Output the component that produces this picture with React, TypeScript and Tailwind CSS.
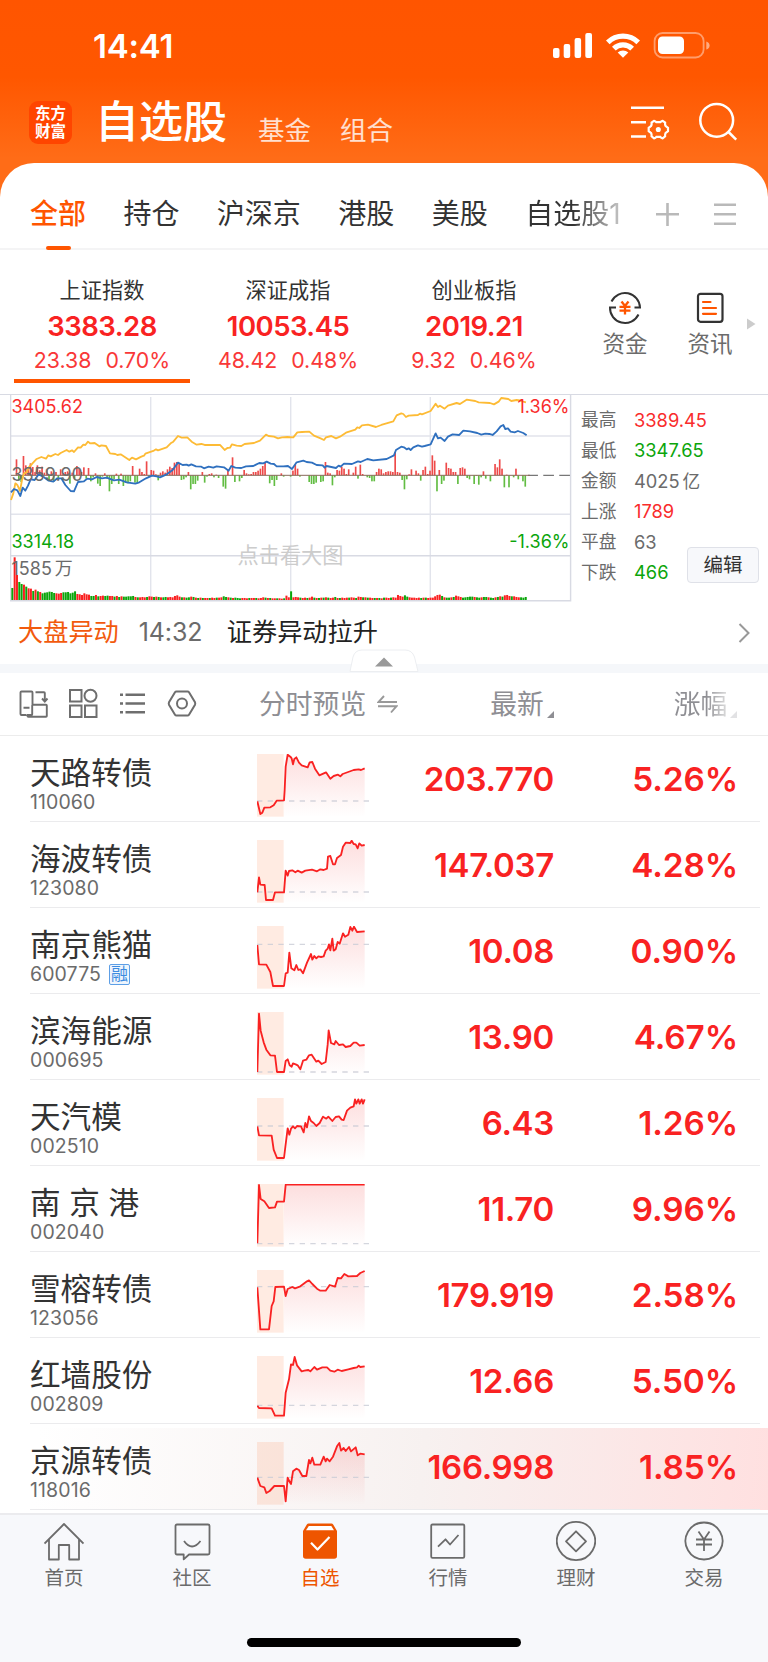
import type { ReactNode } from "react";

type IndexQuote = { name: string; value: string; change: string; percent: string; active?: boolean };

type Stock = {
  name: string;
  code: string;
  price: string;
  percent: string;
  base: number;
  points: string;
  margin?: boolean;
  highlight?: boolean;
};

const GROUPS = ["持仓", "沪深京", "港股", "美股"];

const INDEXES: IndexQuote[] = [
  { name: "上证指数", value: "3383.28", change: "23.38", percent: "0.70%", active: true },
  { name: "深证成指", value: "10053.45", change: "48.42", percent: "0.48%" },
  { name: "创业板指", value: "2019.21", change: "9.32", percent: "0.46%" },
];

const STATS = [
  { label: "最高", value: "3389.45", color: "text-[#f92c2c]" },
  { label: "最低", value: "3347.65", color: "text-[#0ba50b]" },
  { label: "金额", value: "4025", unit: "亿", color: "text-[#6b6b6b]" },
  { label: "上涨", value: "1789", color: "text-[#f92c2c]" },
  { label: "平盘", value: "63", color: "text-[#6b6b6b]" },
  { label: "下跌", value: "466", color: "text-[#0ba50b]" },
];

const STOCKS: Stock[] = [
  {
    name: "天路转债", code: "110060", price: "203.770", percent: "5.26%", base: 141,
    points: "1,142 10,180 16,176 22,161 40,160 50,154 59,140 81,139 83,108 86,38 92,2 100,8 104,13 108,31 112,15 118,10 126,26 134,34 152,40 158,25 166,24 174,44 187,64 207,55 220,74 230,66 243,62 250,67 257,60 290,48 305,46 312,48 323,43",
  },
  {
    name: "海波转债", code: "123080", price: "147.037", percent: "4.28%", base: 156,
    points: "1,157 6,112 10,134 23,135 27,180 48,180 54,157 81,157 86,92 92,107 96,93 106,91 115,97 122,92 134,98 145,92 165,89 180,94 190,88 200,90 210,86 213,50 220,48 228,73 234,73 240,54 252,45 258,20 266,8 280,9 284,2 290,12 296,13 302,25 307,10 314,17 323,15",
  },
  {
    name: "南京熊猫", code: "600775", price: "10.08", percent: "0.90%", base: 55, margin: true,
    points: "1,57 6,115 28,116 40,138 48,180 81,180 86,142 92,140 97,80 103,127 112,133 118,117 124,132 130,130 138,142 150,110 162,84 166,101 172,90 178,97 184,91 192,93 200,91 206,74 212,68 216,55 220,73 226,38 230,74 236,70 242,48 248,53 258,22 264,32 274,26 280,3 286,14 291,2 300,18 323,16",
  },
  {
    name: "滨海能源", code: "000695", price: "13.90", percent: "4.67%", base: 180,
    points: "1,180 6,5 11,56 20,91 28,113 40,130 54,131 60,180 81,180 86,147 92,142 98,160 104,164 108,154 116,157 122,160 130,172 138,146 148,143 156,130 164,128 178,149 184,146 194,156 206,150 212,98 215,55 222,93 232,97 236,87 246,99 258,97 266,105 280,102 290,92 298,92 308,101 323,99",
  },
  {
    name: "天汽模", code: "002510", price: "6.43", percent: "1.26%", base: 84,
    points: "1,85 6,112 44,113 50,155 60,180 81,180 85,147 92,91 97,110 102,92 108,85 114,91 120,84 132,85 140,103 145,75 150,88 156,55 162,69 170,75 178,84 188,75 198,56 208,62 214,56 226,69 236,57 246,55 254,65 260,66 270,38 280,29 290,25 294,4 298,17 304,4 308,17 314,4 318,17 323,4",
  },
  {
    name: "南 京 港", code: "002040", price: "11.70", percent: "9.96%", base: 179,
    points: "1,178 6,3 11,45 22,52 36,72 54,70 60,53 81,53 86,2 323,2",
  },
  {
    name: "雪榕转债", code: "123056", price: "179.919", percent: "2.58%", base: 50,
    points: "1,52 10,178 36,178 44,108 50,94 55,51 81,50 86,78 92,57 106,51 114,55 130,49 150,34 156,31 166,42 180,56 190,62 206,62 218,45 234,50 242,24 252,25 262,12 274,19 300,18 310,9 323,3",
  },
  {
    name: "红墙股份", code: "002809", price: "12.66", percent: "5.50%", base: 148,
    points: "1,149 6,156 44,157 54,179 81,179 86,110 96,70 102,25 108,27 113,3 120,28 134,46 142,44 154,42 160,46 172,33 180,41 196,34 210,34 220,44 232,47 242,41 254,45 274,40 290,36 300,34 305,29 310,33 323,31",
  },
  {
    name: "京源转债", code: "118016", price: "166.998", percent: "1.85%", base: 106, highlight: true,
    points: "1,107 10,132 22,136 28,153 38,147 52,132 81,132 86,178 92,107 97,118 102,126 108,88 118,80 126,84 136,102 148,102 156,54 160,64 166,47 172,68 190,68 200,44 206,58 210,50 218,58 228,44 240,13 247,3 252,26 260,18 266,27 276,15 282,28 296,16 302,40 310,35 323,37",
  },
];

const LEAD_LINE =
  "33,345 40,325 46,295 52,300 60,318 66,285 72,265 80,262 88,245 96,237 110,222 124,216 138,221 145,211 152,214 166,207 174,210 182,204 200,195 208,200 216,196 222,201 234,187 242,188 250,179 256,180 264,170 270,175 284,174 298,184 304,181 318,183 330,205 346,207 352,210 362,208 388,225 396,218 408,223 424,215 432,212 436,206 460,198 468,193 474,196 500,187 512,175 520,170 534,153 545,158 562,157 575,170 590,179 604,177 614,180 660,180 674,195 682,189 690,188 696,178 710,182 724,183 734,177 762,174 780,167 798,149 806,153 822,155 834,160 846,157 862,156 880,157 892,142 906,141 928,140 942,152 962,160 972,165 978,157 994,153 1008,160 1020,155 1038,143 1066,134 1072,127 1078,129 1086,121 1104,119 1128,126 1144,120 1180,109 1190,91 1204,85 1210,87 1218,96 1226,92 1254,90 1260,86 1266,88 1292,78 1307,56 1314,66 1320,62 1334,71 1344,62 1370,54 1380,57 1400,44 1426,48 1436,52 1470,54 1482,58 1496,50 1504,39 1525,42 1534,48 1550,45 1560,46 1570,50 1578,52";

const PRICE_LINE =
  "33,322 42,312 52,316 61,333 68,308 76,317 84,302 92,283 104,285 116,268 130,275 146,287 160,290 172,280 184,280 196,300 212,318 222,319 234,291 252,289 262,281 276,283 290,276 306,280 320,278 342,286 358,284 380,292 406,296 418,292 438,280 456,272 470,274 480,277 500,268 518,255 534,233 548,240 560,239 566,242 574,238 588,244 604,245 612,250 626,245 640,248 650,244 672,247 686,257 694,243 706,248 724,249 738,244 760,243 778,234 790,235 800,230 812,236 822,237 830,244 850,244 864,243 876,252 890,232 910,227 920,231 936,233 950,240 968,241 974,248 980,243 1008,249 1016,242 1022,245 1032,236 1056,237 1074,229 1082,231 1102,222 1120,226 1160,222 1182,211 1188,195 1204,185 1212,187 1220,193 1226,190 1232,195 1240,187 1254,181 1266,185 1274,183 1292,178 1307,145 1314,160 1322,158 1334,168 1344,155 1358,148 1378,150 1390,137 1410,139 1432,144 1444,149 1456,146 1468,147 1478,150 1490,139 1502,124 1510,120 1516,132 1524,130 1532,140 1544,142 1554,138 1570,144 1580,151";

// one value per sample, positive is drawn upwards in red
const MOMENTUM = [
  48, -16, -20, 58, 30, 18, 36, 25, 10, 30, 15, 26, 8, 18, -15, 12, -20, 10, -10, 18, 6, 10, 12, -25, 8, -10, 28, 20,
  10, 24, -10, 22, -18, -6, 6, -25, -32, -4, 6, -10, -48, -26, -12, 5, -26, 5, -32, -22, -24, -18, 28, -22, -24, 20,
  10, 4, 42, -4, 16, 14, 3, -15, 8, 12, 8, 18, 26, 22, 38, 40, 35, -14, -12, -6, 10, -42, -26, -26, -16, 0, 10, -22,
  -4, 4, 6, -6, 2, -8, 0, -34, -40, 18, 0, 54, -20, 0, -18, -8, 16, 6, 3, 4, 10, 10, 14, 20, 28, 38, 0, -24, -14,
  -32, -14, 0, 6, -4, 0, 0, -4, 14, 32, 20, -4, 0, 0, 0, -20, -26, -26, -22, 0, -20, -18, 40, 8, 6, -30, -6, 16, 14,
  26, 20, 4, 18, 0, 8, 26, -10, 32, 4, 0, -6, -8, -18, -18, 10, 20, 18, 6, 10, 12, 12, 10, 70, 10, 8, -14, -42, -12,
  3, 18, 0, 14, 6, -16, 16, 26, 4, 14, 60, 44, -48, 16, -26, -16, 38, 22, 20, 10, 10, -26, 22, 24, 20, -8, -12, 0,
  -26, -2, -28, -6, 12, -10, 0, -18, 0, 34, 24, 48, 20, -36, 2, -36, 0, -6, 20, -12, 0, -18, -34,
];

const VOLUME = [
  -36, 128, 75, -54, -48, 46, -40, 35, 34, -27, 31, -26, 24, -20, -22, -23, -25, -24, -21, 20, 19, 21, -23, -23, -24,
  -20, -22, -26, 18, 17, 15, 20, 17, 16, -12, -12, 15, -11, 12, 13, -12, -13, 12, 12, -10, 12, -9, 11, -10, -10, -11,
  -11, -12, 9, -8, 8, 9, 8, -9, 11, 10, -9, 10, -9, 8, -8, -9, 8, 9, 8, 12, 14, 10, -8, 8, -7, -8, 10, -9, 7, -6, 7,
  -6, 6, 6, -6, 7, 6, -7, 7, 8, -11, -9, 8, -7, 6, -7, -6, -5, 6, 6, 5, -6, 6, 6, -6, 5, 6, 8, -7, 6, -6, 5, 5, -5, 5,
  4, -5, 13, 8, -26, 8, 9, 8, -7, 6, 7, -6, 7, 10, -7, 6, -6, 7, -7, 8, -7, 6, 7, -9, 6, -6, 7, 6, 7, -7, 8, 7, -6, 10,
  9, -8, 8, -7, 7, 6, -6, 6, -6, 5, -7, 7, 6, -7, 8, 7, 15, 12, 10, -14, -10, 8, 7, 7, 6, 7, -6, 7, -7, 6, 7, 7, 11,
  15, 16, -12, 8, -7, -7, 8, -9, 13, 11, 9, -7, -8, -9, -10, -10, 9, -8, -7, 8, -9, -9, 8, -7, -6, 8, -9, 11, -10, 14,
  15, 12, -11, 11, 9, 8, -8, -7, -9,
];

function StatusBar() {
  return (
    <div className="flex h-[90px] items-start justify-between pt-[26px] pl-[93px] pr-[58px]">
      <span className="text-[33px] font-semibold leading-[40px] tracking-[-0.2px]">14:41</span>
      <svg className="mt-[6px]" width="158" height="27" viewBox="552 32 158 27" fill="white">
        <rect x="553" y="48" width="6.5" height="10" rx="2" />
        <rect x="563.7" y="44" width="6.5" height="14" rx="2" />
        <rect x="574.6" y="38" width="6.5" height="20" rx="2" />
        <rect x="585.3" y="33" width="6.7" height="25" rx="2" />
        <path d="M606 40.5a24 24 0 0 1 34 0l-3.6 3.7a19 19 0 0 0-26.8 0z" />
        <path d="M612 46.7a15.7 15.7 0 0 1 22 0l-3.7 3.7a10.5 10.5 0 0 0-14.6 0z" />
        <path d="M617.7 52.5a7.7 7.7 0 0 1 10.6 0l-5.3 5.2z" />
        <rect x="654.6" y="33" width="49" height="24.5" rx="8" fill="none" stroke="white" strokeOpacity=".42" strokeWidth="1.8" />
        <rect x="658" y="36.5" width="26" height="17.5" rx="4.5" />
        <path d="M706.3 41.500v8q3.300-1 3.300-4t-3.300-4z" fillOpacity=".5" />
      </svg>
    </div>
  );
}

function TitleBar() {
  return (
    <div className="flex h-[73px] items-start">
      <div className="ml-[29px] mt-[11px] flex h-[43px] w-[43px] flex-col items-center justify-center rounded-[9px] bg-[#ff4500] text-[15.5px] font-bold leading-[18px]">
        <span>东方</span>
        <span>财富</span>
      </div>
      <h1 className="ml-[23px] mt-[4px] text-[44px] font-medium leading-[56px]">自选股</h1>
      <span className="ml-[31px] mt-[22px] text-[26.5px] leading-[36px] text-white/80">基金</span>
      <span className="ml-[29px] mt-[22px] text-[26.5px] leading-[36px] text-white/80">组合</span>
      <svg className="ml-auto mt-[12px] mr-[30px]" width="108" height="42" viewBox="630 102 108 42" fill="none" stroke="white" strokeWidth="2.5">
        <path d="M631 107.800h33M631 122.300h15M631 136.500h15" />
        <path d="M654 120.800q1.500.3 2.400 1.400h3.900q.9-1.100 2.400-1.400l2.400 1.700q-.3 2 .6 3.600l2.300 1.700v3.400l-2.300 1.700q-.9 1.600-.6 3.500l-2.400 1.900q-1.500-.3-2.400-1.500h-3.900q-.9 1.200-2.400 1.500l-2.400-1.900q.3-1.900-.6-3.500l-2.300-1.700v-3.400l2.300-1.700q.9-1.600.6-3.600z" strokeWidth="2.2" />
        <circle cx="658.3" cy="129.5" r="1.3" />
        <circle cx="716.7" cy="120.3" r="16.4" />
        <path d="M728.500 132l7.700 7.700" />
      </svg>
    </div>
  );
}

function GroupTabs() {
  return (
    <div className="flex h-[87px] items-start border-b-2 border-[#f4f4f5] pt-[31px] text-[28px] leading-[40px] text-[#333]">
      <div className="ml-[30px] flex flex-col items-center font-medium text-[#ff5500]">
        全部
        <span className="mt-[12px] h-[4px] w-[25px] rounded-full bg-[#ff5500]" />
      </div>
      {GROUPS.map((group) => (
        <span key={group} className="ml-[37.4px]">
          {group}
        </span>
      ))}
      <span className="ml-[37.5px] w-[96px] whitespace-nowrap bg-[linear-gradient(90deg,#333_50%,#bbb_95%)] bg-clip-text text-transparent">
        自选股1
      </span>
      <svg className="ml-auto mr-[31px] mt-[8px]" width="82" height="24" viewBox="655 202 82 24" stroke="#b9b9b9" strokeWidth="2.6" fill="none">
        <path d="M656 214.300h23M667.500 203v23M714 204.700h22M714 214.300h22M714 223.700h22" />
      </svg>
    </div>
  );
}

function IndexCard({ name, value, change, percent, active }: IndexQuote) {
  return (
    <div className="flex w-[186px] flex-col items-center">
      <span className="mt-[25px] text-[21.2px] leading-[30px] text-[#333]">{name}</span>
      <span className="mt-[3px] text-[27.5px] font-semibold leading-[36px] tracking-[-0.5px] text-[#f92222]">{value}</span>
      <span className="mt-px flex gap-[14px] text-[21.3px] leading-[30px] text-[#f93838]">
        <span>{change}</span>
        <span>{percent}</span>
      </span>
      {active ? <span className="mt-[4px] h-[4px] w-[176px] bg-[#ff5500]" /> : null}
    </div>
  );
}

function Indexes() {
  return (
    <div className="flex h-[144px] pl-[9px]">
      {INDEXES.map((item) => (
        <IndexCard key={item.name} {...item} />
      ))}
      <div className="ml-[33px] flex w-[50px] flex-col items-center pt-[41px]">
        <svg width="34" height="34" viewBox="-17 -17 34 34" fill="none" stroke="#333" strokeWidth="2">
          <path d="M-13.500-6.500A15 15 0 0 1 15-.5h-5.500M13.500 6.500A15 15 0 0 1-15-.5h6" />
          <path d="M-3.500-6.500L0-2l3.500-4.500M-5.500-1.200h11M-5.500 2.700h11M0-2v8.500" stroke="#ff5500" strokeWidth="2.3" />
        </svg>
        <span className="mt-[4px] text-[22.5px] leading-[30px] text-[#6b6b6b]">资金</span>
      </div>
      <div className="ml-[35px] flex w-[50px] flex-col items-center pt-[41px]">
        <svg width="34" height="34" viewBox="0 0 34 34" fill="none" stroke="#333" strokeWidth="2.2">
          <rect x="5" y="2.8" width="24.5" height="28" rx="2.5" />
          <path d="M10 11h7.500M10 17h13M10 22.800h13" stroke="#ff5500" strokeLinecap="round" />
        </svg>
        <span className="mt-[4px] text-[22.5px] leading-[30px] text-[#6b6b6b]">资讯</span>
      </div>
      <svg className="ml-[11px] mt-[68px]" width="10" height="12" viewBox="0 0 10 12">
        <path d="M1 .5v11L9.500 6z" fill="#ccc" />
      </svg>
    </div>
  );
}

function MarketChart() {
  return (
    <svg className="ml-[10px] shrink-0" width="562" height="208" viewBox="0 0 562 208" fontSize="18">
      <g stroke="#e2e4ec" strokeWidth="1.4" fill="none">
        <path d="M0 42h561M0 120.300h561M140.700 3v203M280.700 3v203M420.300 3v203" />
        <path d="M.6 0v206.700h560V0M0 161.700h561" stroke="#d8dae3" />
      </g>
      <text x="227.5" y="169" fontSize="21.2" fill="#ccc">点击看大图</text>
      <g transform="scale(.3333) translate(-30 -27)">
        {MOMENTUM.map((v, i) => (
          <rect
            key={i}
            x={47 + i * 6.97}
            y={v > 0 ? 271 - v : 271}
            width="5"
            height={Math.abs(v)}
            fill={v > 0 ? "#ee4a4a" : "#62bd43"}
          />
        ))}
        {VOLUME.map((v, i) => (
          <rect key={i} x={34 + i * 6.97} y={645 - Math.abs(v)} width="6" height={Math.abs(v)} fill={v > 0 ? "#fa2020" : "#0ba50b"} />
        ))}
        <path d="M1584 271H1712" stroke="#777" strokeWidth="3.5" strokeDasharray="32 16" strokeDashoffset="-46" />
        <path d="M33 271H1590" stroke="#8a6a5a" strokeWidth="3" />
        <g fill="none" strokeWidth="5.5" strokeLinejoin="round">
          <polyline points={LEAD_LINE} stroke="#fdbb35" />
          <polyline points={PRICE_LINE} stroke="#2f70bf" />
        </g>
      </g>
      <g fill="#f92c2c">
        <text x="1.5" y="18.7">3405.62</text>
        <text x="559.5" y="18.7" textAnchor="end">1.36%</text>
      </g>
      <g fill="#0ba50b">
        <text x="1.5" y="154.3">3314.18</text>
        <text x="559.5" y="154.3" textAnchor="end">-1.36%</text>
      </g>
      <g fill="#6b6b6b">
        <text x="1.5" y="87">3359.90</text>
        <text x="1.5" y="181.3">1585<tspan dx="3">万</tspan></text>
      </g>
    </svg>
  );
}

function MarketPanel() {
  return (
    <div className="relative flex h-[208px] shadow-[inset_0_1px_0_#d8dae3]">
      <MarketChart />
      <div className="ml-[9px] pt-[11px]">
        {STATS.map((stat) => (
          <div key={stat.label} className="flex h-[30.6px] items-center text-[17.7px]">
            <span className="w-[53px] text-[#6b6b6b]">{stat.label}</span>
            <span className={stat.color}>
              <span className="text-[18.3px]">{stat.value}</span>
              {stat.unit ? <span className="ml-[3px]">{stat.unit}</span> : null}
            </span>
          </div>
        ))}
      </div>
      <button className="absolute right-[9px] top-[153px] h-[36px] w-[72px] rounded-[4px] border border-[#dfe1e8] bg-[#f7f8fb] text-[19.5px] leading-[34px] text-[#333]">
        编辑
      </button>
    </div>
  );
}

function NewsLine() {
  return (
    <div className="relative h-[71px]">
      <div className="flex h-[61px] items-center pl-[18px] text-[25.2px]">
        <span className="text-[#f25a0d]">大盘异动</span>
        <span className="ml-[20px] w-[68px] text-[25px] tracking-[-0.1px] text-[#6b6b6b]">14:32</span>
        <span className="ml-[20px] text-[#222]">证券异动拉升</span>
        <svg className="ml-auto mr-[18px]" width="12" height="22" viewBox="0 0 12 22" fill="none" stroke="#999" strokeWidth="2">
          <path d="M1.500 2l9 9-9 9" />
        </svg>
      </div>
      <div className="mt-px h-[9px] bg-[#f5f7fa]" />
      <svg className="absolute left-[349px] top-[47px]" width="70" height="23" viewBox="0 0 70 23">
        <path d="M1 22.500L4 8Q6 1 13 1h43q7 0 9.500 7l3.500 14.500z" fill="#fff" stroke="#eceef1" />
        <path d="M26 17.500L35 8.500l9 9z" fill="#999" />
      </svg>
    </div>
  );
}

function ListHeader() {
  return (
    <div className="flex h-[63px] items-center border-b border-[#ececec] pl-[18px] text-[26.8px] text-[#8e8e93]">
      <svg width="182" height="32" viewBox="18 689 182 32" fill="none" stroke="#6e6e6e" strokeWidth="2">
        <path d="M32.500 706V693.500q0-1-1-1H21.500q-1 0-1 1v21.500q0 1 1 1h5M23.500 708.700h6M35.500 693.300h8.500q.8 0 .8.800v8M42 699.500l2.800 3 2.700-3M27.500 716v1q0 .8.800.8H46q.8 0 .8-.8v-10.500q0-.8-.8-.8H33q-.8 0-.8.800v8.700q0 .8-.8.800h-4.500" strokeWidth="1.900" />
        <rect x="70" y="691" width="11.500" height="11.500" />
        <circle cx="90.5" cy="696.7" r="6" />
        <rect x="70" y="706.5" width="11.500" height="11.500" />
        <rect x="85" y="706.5" width="11.500" height="11.500" />
        <path d="M125.500 695.700h19.500M125.500 704.500h19.500M125.500 713.300h19.500M120 695.700h3M120 704.500h3M120 713.300h3" strokeWidth="2.4" />
        <path d="M176.500 692.500h11q1 0 1.500.8l6 10q.5 1.200 0 2.400l-6 10q-.5.800-1.500.800h-11q-1 0-1.500-.8l-6-10q-.5-1.200 0-2.400l6-10q.5-.8 1.500-.8z" />
        <circle cx="182" cy="704.5" r="5" />
      </svg>
      <span className="ml-[59px]">分时预览</span>
      <svg className="ml-[11px]" width="21" height="20" viewBox="0 0 21 20" fill="none" stroke="#999" strokeWidth="1.9">
        <path d="M7 2L1.500 8H20M1 12.200h18.500L14 18.500" />
      </svg>
      <span className="ml-[92px]">最新</span>
      <svg className="ml-[3px] mt-[21px]" width="7" height="7" viewBox="0 0 7 7">
        <path d="M7 0v7H0z" fill="#8e8e93" />
      </svg>
      <span className="ml-[120px] bg-[linear-gradient(90deg,#8e8e93_60%,#ddd)] bg-clip-text text-transparent">涨幅</span>
      <svg className="ml-[3px] mt-[21px]" width="7" height="7" viewBox="0 0 7 7">
        <path d="M7 0v7H0z" fill="#e2e2e4" />
      </svg>
    </div>
  );
}

function Sparkline({ id, points, base }: { id: string; points: string; base: number }) {
  const open = points.split(" ").filter((p) => Number(p.split(",")[0]) >= 81);

  return (
    <svg className="mt-[18px] shrink-0" width="114" height="63" viewBox="0 0 342 189">
      <defs>
        <linearGradient id={id} x1="0" y1="0" x2="0" y2="189" gradientUnits="userSpaceOnUse">
          <stop offset="0" stopColor="#f02020" stopOpacity=".15" />
          <stop offset="1" stopColor="#f02020" stopOpacity="0" />
        </linearGradient>
      </defs>
      <rect width="80" height="188" fill="#ff7a3d" fillOpacity=".15" />
      <polygon points={`81,189 ${open.join(" ")} 323,189`} fill={`url(#${id})`} />
      <path d={`M0 ${base}H340`} stroke="#c9ccd6" strokeOpacity=".8" strokeWidth="4" strokeDasharray="16 16" />
      <polyline points={points} fill="none" stroke="#f92222" strokeWidth="5.5" strokeLinejoin="round" />
    </svg>
  );
}

function StockRow({ stock }: { stock: Stock }) {
  return (
    <div className="relative flex h-[86px]">
      {stock.highlight ? (
        <div className="absolute inset-x-0 bottom-0 top-[4px] bg-[linear-gradient(95deg,#ffffff_5%,#f7f1f0_55%,#ffe0e0)]" />
      ) : null}
      <div className="relative ml-[30px] flex w-[730px] border-b border-[#ebebed]">
        <div className="w-[227px] shrink-0 pt-[17px]">
          <p className="whitespace-pre text-[30.6px] leading-[40px] text-[#333]">{stock.name}</p>
          <p className="flex items-center text-[19.5px] leading-[18px] tracking-[0.1px] text-[#6b6b6b]">
            {stock.code}
            {stock.margin ? (
              <span className="-my-[2px] ml-[8px] h-[21px] w-[21px] rounded-[2px] border border-[#5d9fe6] bg-[#eef5fd] text-center text-[17px] leading-[18px] text-[#3d8be0]">
                融
              </span>
            ) : null}
          </p>
        </div>
        <Sparkline id={`fade-${stock.code}`} points={stock.points} base={stock.base} />
        <span className="w-[183px] text-right text-[33px] font-semibold leading-[86px] tracking-[-0.3px] text-[#f92222]">{stock.price}</span>
        <span className="w-[184px] text-right text-[33.3px] font-semibold leading-[86px] tracking-[-0.1px] text-[#f92222]">{stock.percent}</span>
      </div>
    </div>
  );
}

const NAV: { label: string; icon: ReactNode; active?: boolean }[] = [
  { label: "首页", icon: <path d="M.5 22.500L20 3l19.500 19.500M5 18.500v20h9.800V24h10.400v14.500H35v-20" /> },
  {
    label: "社区",
    icon: <path d="M5 3.500h31q1.500 0 1.500 1.500v27q0 1.500-1.500 1.500H17l-5.300 4.800v-4.800H5q-1.500 0-1.500-1.500V5q0-1.500 1.500-1.500zM12 20q8 11 16.500 0" />,
  },
  {
    label: "自选",
    active: true,
    icon: (
      <>
        <path d="M8.500 2.500h23q1 0 1.500.8l4 6.700v25q0 2.800-2.800 2.800H5.800Q3 37.800 3 35V10l4-6.700q.5-.8 1.500-.8z" fill="#ee5500" stroke="none" />
        <path d="M8.800 5h22.500l2.700 4.200H6z" fill="#fff" stroke="none" />
        <path d="M11 21.700l6.500 6.800 12-12.500" stroke="#fff" strokeWidth="2.2" />
      </>
    ),
  },
  { label: "行情", icon: <path d="M4.500 3.500H35q1.300 0 1.300 1.300v30.700q0 1.300-1.300 1.300H4.500q-1.300 0-1.300-1.300V4.800q0-1.300 1.300-1.300zM10 25.700l7.500-7.400 4.500 5.200L30.500 14" /> },
  { label: "理财", icon: <path d="M20 .9a19.100 19.100 0 1 0 .01 0zM20 10.300l10 10-10 10-10-10z" /> },
  { label: "交易", icon: <path d="M20 1.500a18.500 18.500 0 1 0 .01 0zM14.500 10.500l5.500 8 5.500-8M12 18.500h16M12 23.500h16M20 18.500V30" /> },
];

function BottomNav() {
  return (
    <nav className="flex h-[149px] flex-col items-center justify-between border-t-2 border-[#ebebee] bg-[#f7f8fb]">
      <div className="flex w-full">
        {NAV.map(({ label, icon, active }) => (
          <div key={label} className={active ? "flex flex-1 flex-col items-center pt-[6px] text-[#ee5500]" : "flex flex-1 flex-col items-center pt-[6px] text-[#6b6b6b]"}>
            <svg width="40" height="40" viewBox="0 0 40 40" fill="none" stroke="currentColor" strokeWidth="1.8" strokeLinejoin="round">
              {icon}
            </svg>
            <span className="mt-[3px] text-[19.5px] leading-[28px]">{label}</span>
          </div>
        ))}
      </div>
      <div className="mb-[15px] h-[9px] w-[274px] rounded-full bg-black" />
    </nav>
  );
}

export default function App() {
  return (
    <div className="h-[1662px] w-[768px] overflow-hidden bg-white font-['Inter','Noto_Sans_CJK_SC',sans-serif]">
      <header className="h-[203px] bg-[linear-gradient(180deg,#ff5500_0%,#ff5700_38%,#ff6c17_78%)] text-white">
        <StatusBar />
        <TitleBar />
      </header>
      <main className="relative -mt-[40px] rounded-t-[34px] bg-white">
        <GroupTabs />
        <Indexes />
        <MarketPanel />
        <NewsLine />
        <ListHeader />
        {STOCKS.map((stock) => (
          <StockRow key={stock.code} stock={stock} />
        ))}
        <div className="h-[3px]" />
      </main>
      <BottomNav />
    </div>
  );
}
